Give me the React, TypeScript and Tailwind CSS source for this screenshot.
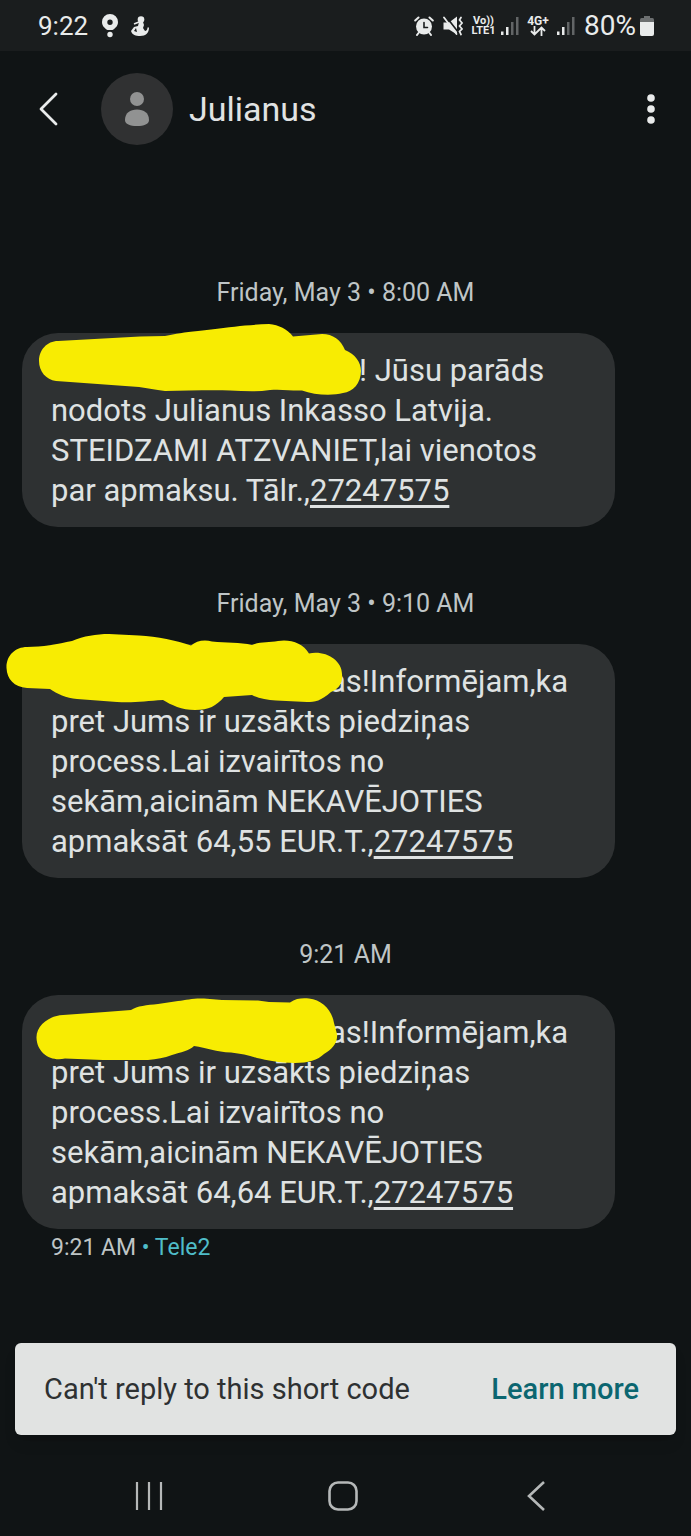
import React from 'react';

type Mask = { box: string; className: string; d: string };

type Message = {
  id: number;
  time: string;
  lines: string[];
  indent: string;
  phone: string;
  mask: Mask;
};

const messages: Message[] = [
  {
    id: 1,
    time: 'Friday, May 3 • 8:00 AM',
    lines: ['! Jūsu parāds', 'nodots Julianus Inkasso Latvija.', 'STEIDZAMI ATZVANIET,lai vienotos', 'par apmaksu. Tālr.,'],
    indent: 'pl-[308px]',
    phone: '27247575',
    mask: {
      box: '38 324 324 72',
      className: 'absolute left-4 -top-[9px] w-[324px] h-[72px]',
      d: 'M39 361C39 350 47 341 58 341L140 336.500L165 336C176 334 184 332 198 331C216 329 232 327 245 325.500C254 325 261 324 269 324C279 325 287 329 293 336.500L322 334C333 334 341 340 345 350C355 354 361 362 361 371C361 383 353 392 343 393C332 396 314 395 302 390.500C292 391 282 389 270 390C257 392 244 391 230 390.500C205 390 184 391 165 391C155 390 148 388 139 387L70 382L56 381C46 380 39 371 39 361Z',
    },
  },
  {
    id: 2,
    time: 'Friday, May 3 • 9:10 AM',
    lines: ['as!Informējam,ka', 'pret Jums ir uzsākts piedziņas', 'process.Lai izvairītos no', 'sekām,aicinām NEKAVĒJOTIES', 'apmaksāt 64,55 EUR.T.,'],
    indent: 'pl-[278px]',
    phone: '27247575',
    mask: {
      box: '6 633 338 78',
      className: 'absolute -left-4 -top-[11px] w-[338px] h-[78px]',
      d: 'M6.500 668C6 656 15 647 27 647C42 647 58 644 72 641C84 636 96 634 109 634L139 635.500C157 636 177 641 191 645.500C196 641 204 639 212 641.500C226 643 240 642 252 645C261 641 269 643 278 641C290 639 303 643 309 653.500C325 650 342 660 342 674C343 684 338 689 331 692C321 701 315 702 307 702L276 700.500C267 700 258 698 252 695L224 697C216 706 209 710 195 710C182 710 171 705 163 700C146 701 134 703 117 702L77 699C66 698 57 694 50 689L27 688C14 687 7 679 6.500 668Z',
    },
  },
  {
    id: 3,
    time: '9:21 AM',
    lines: ['as!Informējam,ka', 'pret Jums ir uzsākts piedziņas', 'process.Lai izvairītos no', 'sekām,aicinām NEKAVĒJOTIES', 'apmaksāt 64,64 EUR.T.,'],
    indent: 'pl-[278px]',
    phone: '27247575',
    mask: {
      box: '36 997 302 67',
      className: 'absolute left-[14px] top-0.5 w-[302px] h-[67px]',
      d: 'M36.500 1038C36 1026 48 1016 63 1015L105 1012L131 1010C137 1006 147 1005 158 1004L178 1001C187 1000 193 998 204 998.500L222 1000L258 1000.500L269 1002L290 1002.500C296 998 303 998 309 998.500C322 1000 332 1010 334 1023L337 1034C338 1043 332 1049 324 1054C318 1060 308 1063 295 1063C279 1063 267 1060 257 1058C249 1055 241 1054 231 1052.500C216 1052 207 1048 194 1046C189 1051 181 1052 172 1055C164 1058 157 1059 148 1060L103 1060L65 1058.500C51 1062 37 1053 36.500 1038Z',
    },
  },
];

const AlarmIcon = () => (
  <svg className="w-5 h-5" viewBox="0 0 20 20" fill="none" stroke="#e9ebeb" strokeLinecap="round">
    <circle cx="10" cy="10.500" r="8" fill="#e9ebeb" stroke="none" />
    <path d="M1.200 4.500 4.500 1.500M18.800 4.500 15.500 1.500M4.500 17 3 19M15.500 17 17 19" strokeWidth="2" />
    <path d="M10 6.500v5h3.500" stroke="#1a1d1e" strokeWidth="1.600" />
  </svg>
);

const MuteIcon = () => (
  <svg className="w-5 h-5" viewBox="0 0 20 20" fill="none" stroke="#e9ebeb" strokeLinecap="round">
    <path d="M0.500 6.500h5.500L14 0.500v18l-8-5H0.500z" fill="#e9ebeb" stroke="none" />
    <path d="M3 0.500 15.500 16.500" stroke="#1a1d1e" strokeWidth="1.600" />
    <path d="M1 1.500 13.500 18" strokeWidth="1.800" />
    <path d="m18 1.500-1.500 2.500L19 7l-2.500 3 2.500 3-2.500 2.500L18 18.500" strokeWidth="1.700" />
  </svg>
);

const SignalIcon = () => (
  <svg className="w-[18px] h-[18px]" viewBox="0 0 18 18">
    <path d="M0 14.500h2.500V18H0zM5 10h2.500v8H5z" fill="#e9ebeb" />
    <path d="M10 5h2.500v13H10zM15 0h2.500v18H15z" fill="#626566" />
  </svg>
);

const StatusBar = () => (
  <div className="flex h-[51px] items-center bg-[#1a1d1e] pl-[38px] pr-[37px] text-[26px] leading-[30px] text-[#e9ebeb]">
    <span>9:22</span>
    <svg className="ml-[14px] w-4 h-6" viewBox="0 0 16 24" fill="#e9ebeb">
      <path fillRule="evenodd" d="M8 0a8 8 0 0 1 8 8c0 4-3 6.500-5.500 8h-5C3 14.500 0 12 0 8a8 8 0 0 1 8-8Zm0 5.500a2.700 2.700 0 1 0 0 5.400 2.700 2.700 0 0 0 0-5.400Z" />
      <circle cx="8" cy="20.500" r="2.700" />
    </svg>
    <svg className="ml-[13px] w-[18px] h-5" viewBox="0 0 18 20" fill="#e9ebeb">
      <circle cx="10" cy="3.500" r="3.300" />
      <path d="M8 6h4l1 3-1 3 2 3c1.500 0 2.500-1.500 2.500-3.500H18c0 5-3 8.500-9 8.500-4 0-8-1-9-5l3-4 4-1z" />
      <path d="m3 8 5-2" stroke="#e9ebeb" strokeWidth="1.800" />
      <path d="m5 12-2 3 3 1z" fill="#1a1d1e" />
    </svg>
    <div className="ml-auto flex items-center">
      <AlarmIcon />
      <span className="ml-[9px]"><MuteIcon /></span>
      <span className="ml-2 flex w-[25px] flex-col items-center text-[11px] font-bold leading-[10px]">
        <span>Vo))</span>
        <span>LTE1</span>
      </span>
      <span className="ml-[5px]"><SignalIcon /></span>
      <span className="ml-2 flex w-[22px] flex-col items-center text-[12px] font-bold leading-[10px]">
        <span>4G+</span>
        <svg className="w-4 h-[10px]" viewBox="0 0 16 10" fill="none" stroke="#e9ebeb" strokeWidth="1.800">
          <path d="M4.500 0v8.500M1 5l3.500 3.500L8 5M11.500 10V1.500M8 5l3.500-3.500L15 5" />
        </svg>
      </span>
      <span className="ml-2"><SignalIcon /></span>
      <span className="ml-[9px] text-[28px]">80%</span>
      <svg className="ml-1 w-[14px] h-5" viewBox="0 0 14 20">
        <path d="M4 0h6v2h2.500Q14 2 14 4v3H0V4q0-2 1.500-2H4z" fill="#6c6f70" />
        <path d="M0 6h14v12q0 2-2 2H2q-2 0-2-2z" fill="#e9ebeb" />
      </svg>
    </div>
  </div>
);

const Header = () => (
  <header className="flex h-[115px] items-center pl-[38px] pr-[30px]">
    <button aria-label="Back">
      <svg className="w-5 h-9" viewBox="0 0 20 36" fill="none" stroke="#e9ebeb" strokeWidth="2.800" strokeLinecap="round" strokeLinejoin="round">
        <path d="M18 3 3 18l15 15" />
      </svg>
    </button>
    <div className="ml-[43px] flex h-[72px] w-[72px] items-center justify-center rounded-full bg-[#303132]">
      <svg className="w-6 h-[34px]" viewBox="0 0 24 34" fill="#919292">
        <circle cx="12" cy="7" r="7" />
        <path d="M0 28C0 21 5 17.500 12 17.500S24 21 24 28c0 4-5 6-12 6S0 32 0 28Z" />
      </svg>
    </div>
    <h1 className="ml-4 text-[34px] leading-10 text-[#e1e3e3]">Julianus</h1>
    <button aria-label="More options" className="ml-auto">
      <svg className="w-5 h-8" viewBox="0 0 20 32" fill="#e9ebeb">
        <circle cx="10" cy="5" r="3.800" />
        <circle cx="10" cy="16" r="3.800" />
        <circle cx="10" cy="27" r="3.800" />
      </svg>
    </button>
  </header>
);

const Bubble = ({ message }: { message: Message }) => (
  <div className="relative ml-[22px] mr-[76px] mt-6 rounded-[36px] bg-[#2e3132] pb-4 pl-[29px] pt-[18px] text-[31px] leading-10 text-[#dfe2e2]">
    {message.lines.map((line, i) => (
      <p key={i} className={i === 0 ? `whitespace-nowrap ${message.indent}` : 'whitespace-nowrap'}>
        {line}
        {i === message.lines.length - 1 && (
          <a href={`tel:${message.phone}`} className="underline decoration-[3px] underline-offset-4">{message.phone}</a>
        )}
      </p>
    ))}
    <svg className={message.mask.className} viewBox={message.mask.box} fill="#f8ec02">
      <path d={message.mask.d} />
    </svg>
  </div>
);

const App = () => {
  return (
    <div className="flex min-h-screen flex-col bg-[#101415] font-['Roboto',sans-serif]">
      <StatusBar />
      <Header />
      <main className="flex flex-col gap-[61px] pt-[111px]">
        {messages.map((message) => (
          <section key={message.id}>
            <p className="text-center text-[25px] leading-8 text-[#bfc5c6]">{message.time}</p>
            <Bubble message={message} />
          </section>
        ))}
      </main>
      <p className="ml-[51px] mt-[3px] text-[23px] leading-8 text-[#bfc5c6]">
        9:21 AM <span className="text-[#4fbdc9]">• Tele2</span>
      </p>
      <div className="mx-[15px] mt-auto flex h-[92px] items-center justify-between rounded-md bg-[#e1e3e2] pl-[29px] pr-[37px] text-[29px] leading-8 shadow-lg">
        <span className="text-[#2e3132]">Can't reply to this short code</span>
        <a href="#" className="font-medium text-[#0b6670]">Learn more</a>
      </div>
      <nav className="mt-[46px] mb-[25px] flex items-center justify-around pl-[52px] pr-[57px]">
        <button aria-label="Recents">
          <svg className="w-[30px] h-[30px]" viewBox="0 0 30 30" stroke="#b5b8b8" strokeWidth="2.200">
            <path d="M3 1v28M15 1v28M27 1v28" />
          </svg>
        </button>
        <button aria-label="Home">
          <svg className="w-[30px] h-[30px]" viewBox="0 0 30 30" fill="none" stroke="#b5b8b8" strokeWidth="2.600">
            <rect x="1.500" y="1.500" width="27" height="27" rx="8.500" />
          </svg>
        </button>
        <button aria-label="Navigate back">
          <svg className="w-[30px] h-[30px]" viewBox="0 0 30 30" fill="none" stroke="#b5b8b8" strokeWidth="2.600">
            <path d="M22 1 7 15l15 14" />
          </svg>
        </button>
      </nav>
    </div>
  );
};

export default App;
